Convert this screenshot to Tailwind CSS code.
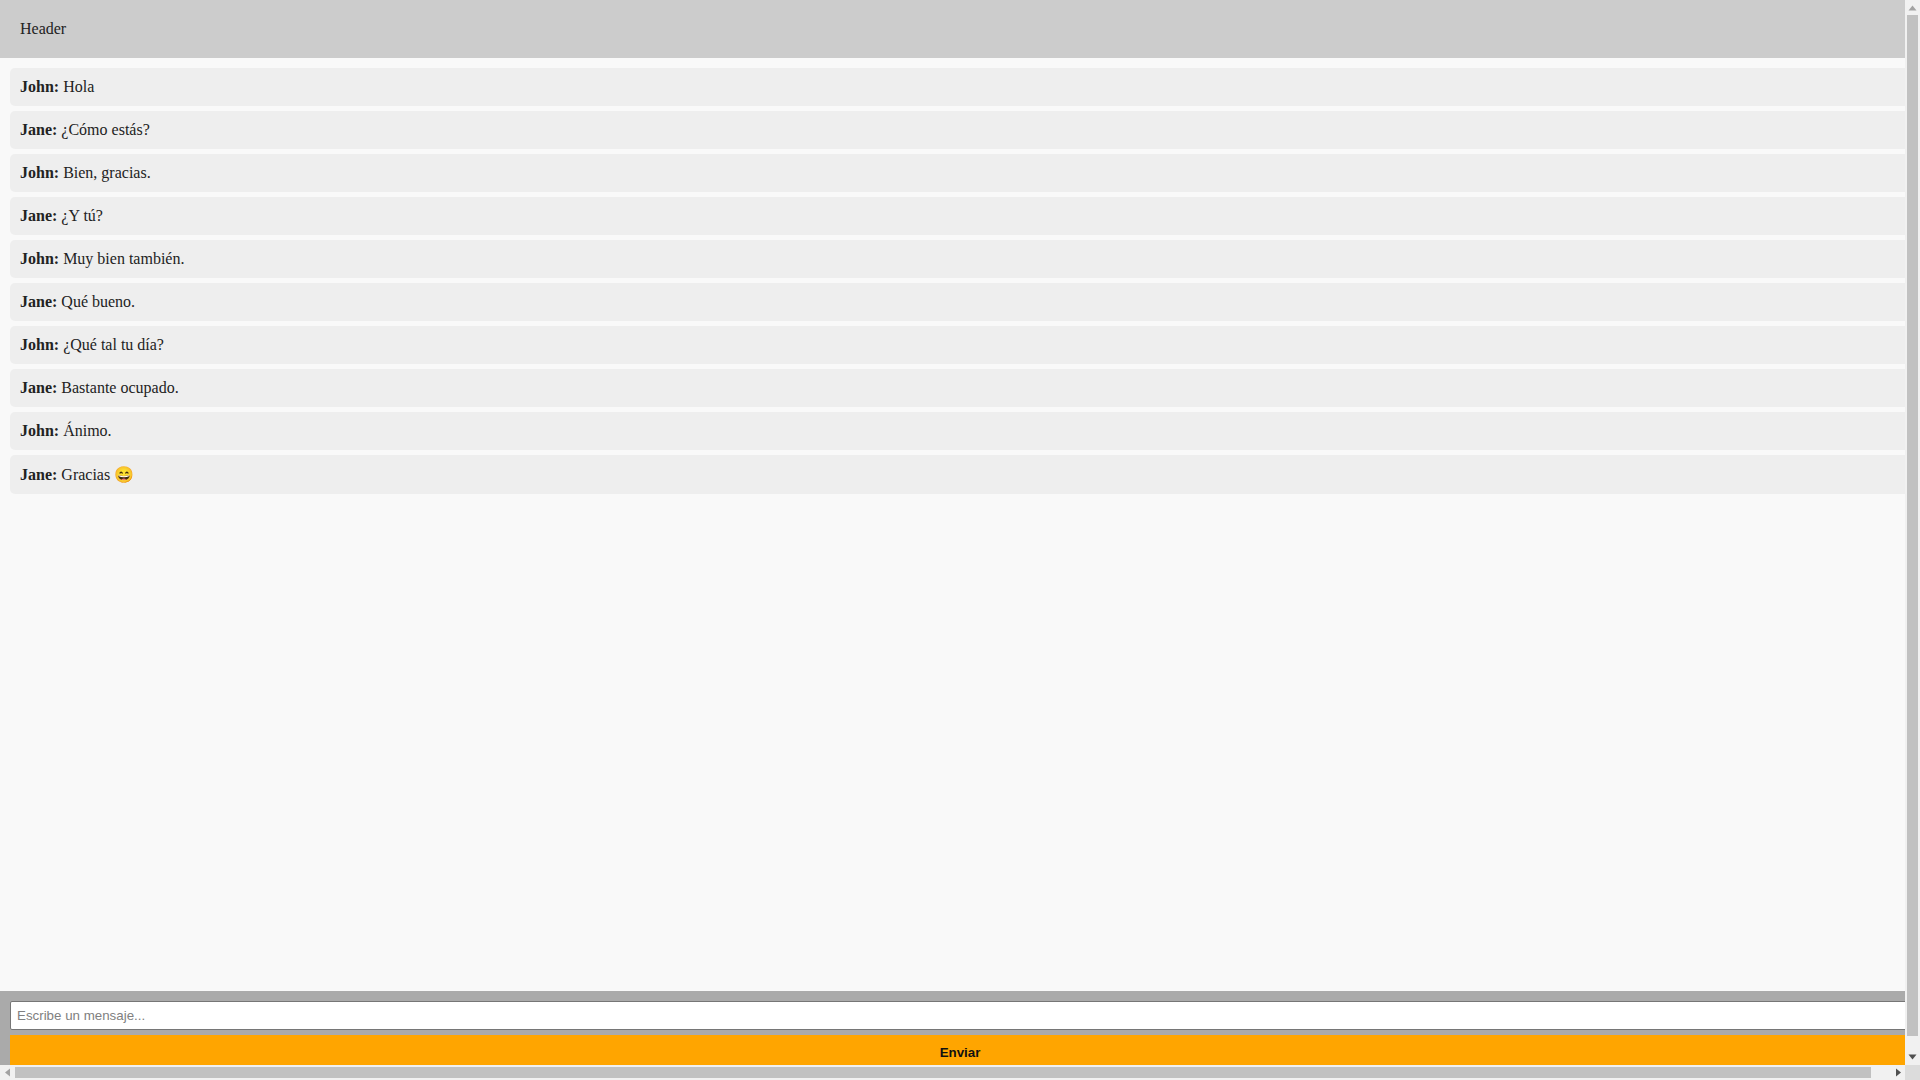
<!DOCTYPE html>
<html lang="es">
<head>
<meta charset="utf-8">
<title>Chat</title>
<script src="https://cdn.jsdelivr.net/npm/@tailwindcss/browser@4"></script>
</head>
<body class="flex h-screen w-screen flex-col overflow-hidden bg-[#f9f9f9] font-['Liberation_Serif',serif] text-base leading-[normal] text-[#222222]">
<header class="bg-[#cccccc] p-5">Header</header>
<main class="flex flex-1 flex-col gap-[5px] p-2.5">
<div class="rounded-[5px] bg-[#eeeeee] p-2.5"><strong class="font-bold">John:</strong> Hola</div>
<div class="rounded-[5px] bg-[#eeeeee] p-2.5"><strong class="font-bold">Jane:</strong> ¿Cómo estás?</div>
<div class="rounded-[5px] bg-[#eeeeee] p-2.5"><strong class="font-bold">John:</strong> Bien, gracias.</div>
<div class="rounded-[5px] bg-[#eeeeee] p-2.5"><strong class="font-bold">Jane:</strong> ¿Y tú?</div>
<div class="rounded-[5px] bg-[#eeeeee] p-2.5"><strong class="font-bold">John:</strong> Muy bien también.</div>
<div class="rounded-[5px] bg-[#eeeeee] p-2.5"><strong class="font-bold">Jane:</strong> Qué bueno.</div>
<div class="rounded-[5px] bg-[#eeeeee] p-2.5"><strong class="font-bold">John:</strong> ¿Qué tal tu día?</div>
<div class="rounded-[5px] bg-[#eeeeee] p-2.5"><strong class="font-bold">Jane:</strong> Bastante ocupado.</div>
<div class="rounded-[5px] bg-[#eeeeee] p-2.5"><strong class="font-bold">John:</strong> Ánimo.</div>
<div class="rounded-[5px] bg-[#eeeeee] p-2.5"><strong class="font-bold">Jane:</strong> Gracias 😄</div>
</main>
<footer class="flex flex-col items-start gap-[5px] bg-[#aaaaaa] p-2.5">
<input type="text" placeholder="Escribe un mensaje..." class="h-[29px] w-[1915px] shrink-0 rounded-[2px] border border-[#767676] bg-white px-[6px] font-['Liberation_Sans',sans-serif] text-[13.3333px] text-black placeholder:text-[#808080]">
<button class="h-[35px] w-full bg-[#ffa500] font-['Liberation_Sans',sans-serif] text-[13.3333px] font-bold text-[#111111]">Enviar</button>
</footer>

<div class="fixed top-0 right-0 flex h-[1065px] w-[15px] flex-col items-center bg-[#f1f1f1]">
  <div class="flex h-[15px] w-full shrink-0 items-center justify-center">
    <svg width="15" height="15" viewBox="0 0 15 15"><polygon points="3.5,10.5 11.5,10.5 7.5,5.5" fill="#a3a3a3"/></svg>
  </div>
  <div class="h-[1021px] w-[11px] shrink-0 bg-[#c1c1c1]"></div>
  <div class="mt-auto flex h-[15px] w-full shrink-0 items-center justify-center">
    <svg width="15" height="15" viewBox="0 0 15 15"><polygon points="3.5,4.5 11.5,4.5 7.5,9.5" fill="#505050"/></svg>
  </div>
</div>
<div class="fixed right-[15px] bottom-0 left-0 flex h-[15px] items-center bg-[#f1f1f1]">
  <div class="flex h-[15px] w-[15px] shrink-0 items-center justify-center">
    <svg width="15" height="15" viewBox="0 0 15 15"><polygon points="10,3.5 10,11.5 5,7.5" fill="#a3a3a3"/></svg>
  </div>
  <div class="h-[11px] w-[1856px] shrink-0 bg-[#c1c1c1]"></div>
  <div class="ml-auto flex h-[15px] w-[15px] shrink-0 items-center justify-center">
    <svg width="15" height="15" viewBox="0 0 15 15"><polygon points="6,3.5 6,11.5 11,7.5" fill="#505050"/></svg>
  </div>
</div>
<div class="fixed right-0 bottom-0 h-[15px] w-[15px] bg-[#dcdcdc]"></div>
</body>
</html>
